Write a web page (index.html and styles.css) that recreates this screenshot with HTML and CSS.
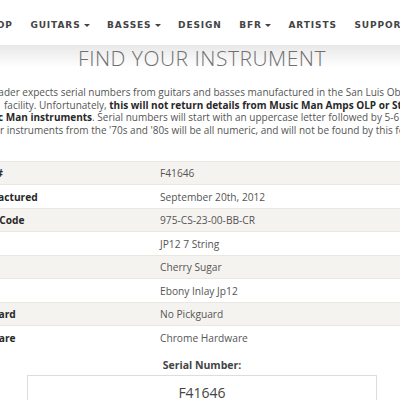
FILE: index.html
```html
<!doctype html>
<html>
	<head>
		<title>Serial Number Reader</title>
		<link rel="stylesheet" href="styles.css">
	</head>
	<body>
		<div class="page">
			<header class="topbar">
				<nav class="menu">
					<a href="#">SHOP</a>
					<a href="#">GUITARS <span class="caret"></span></a>
					<a href="#">BASSES <span class="caret"></span></a>
					<a href="#">DESIGN</a>
					<a href="#">BFR <span class="caret"></span></a>
					<a href="#">ARTISTS</a>
					<a href="#">SUPPORT</a>
				</nav>
			</header>

			<div class="banner">
				<h1>FIND YOUR INSTRUMENT</h1>
			</div>

			<p class="intro">
				<span class="line l1">The Serial Number Reader expects serial numbers from guitars and basses manufactured in the San Luis Obispo</span>
				<span class="line l2">facility. Unfortunately, <strong>this will not return details from Music Man Amps OLP or Sterling by</strong></span>
				<span class="line l3"><strong>Music Man instruments</strong>. Serial numbers will start with an uppercase letter followed by 5-6 numbers.</span>
				<span class="line l4">Older instruments from the '70s and '80s will be all numeric, and will not be found by this form.</span>
			</p>

			<table class="specs">
				<tr><th>Serial #</th><td>F41646</td></tr>
				<tr><th>Manufactured</th><td>September 20th, 2012</td></tr>
				<tr><th>Model Code</th><td>975-CS-23-00-BB-CR</td></tr>
				<tr><th>Model</th><td>JP12 7 String</td></tr>
				<tr><th>Color</th><td>Cherry Sugar</td></tr>
				<tr><th>Neck</th><td>Ebony Inlay Jp12</td></tr>
				<tr><th>Pickguard</th><td>No Pickguard</td></tr>
				<tr><th>Hardware</th><td>Chrome Hardware</td></tr>
			</table>

			<form class="lookup">
				<label for="serial">Serial Number:</label>
				<input id="serial" type="text" value="F41646">
			</form>
		</div>
	</body>
</html>
```

FILE: styles.css
```css
body {
	margin: 0;
	overflow: hidden;
	color: rgb(68,68,68);
	font-family: "Open Sans", "DejaVu Sans", sans-serif;
	background: rgb(255,255,255);
}

	.page {
		width: 640px;
		margin-left: -118px;
	}

	.topbar {
		height: 45px;
		background: rgb(255,255,255);
	}

	.menu {
		display: flex;
		gap: 17.5px;
		padding: 20px 0 0 99px;
	}

	.menu a {
		color: rgb(68,68,68);
		font-family: "DejaVu Sans", sans-serif;
		font-size: 9px;
		font-weight: 600;
		letter-spacing: 0.9px;
		text-decoration: none;
		white-space: nowrap;
	}

	.caret {
		display: inline-block;
		width: 0;
		height: 0;
		margin-left: -1px;
		vertical-align: middle;
		border-top: 3px solid rgb(68,68,68);
		border-left: 3px solid transparent;
		border-right: 3px solid transparent;
	}

	.banner {
		height: 25px;
		background: linear-gradient(rgb(232,232,232), rgb(255,255,255) 90%);
	}

	h1 {
		margin: 0;
		padding-top: 1px;
		text-align: center;
		color: rgb(112,112,112);
		font-size: 21px;
		font-weight: 300;
		letter-spacing: 0.5px;
		line-height: 24px;
	}

	.intro {
		margin: 16px 0 0;
		font-size: 10px;
		line-height: 12.7px;
		color: rgb(85,85,85);
		white-space: nowrap;
	}

	.intro .line {
		display: block;
	}

	.intro strong {
		color: rgb(40,40,40);
	}

	.l1 { margin-left: 15px; }
	.l2 { margin-left: 122px; }
	.l3 { margin-left: 92px; }
	.l4 { margin-left: 96px; }

	.specs {
		width: 100%;
		margin-top: 24px;
		border-collapse: collapse;
		font-size: 10.2px;
	}

	.specs tr {
		height: 23.5px;
		border-top: 1px solid rgb(234,230,224);
	}

	.specs tr:nth-child(odd) {
		background: rgb(245,243,239);
	}

	.specs th {
		width: 185px;
		padding: 0 0 0 83px;
		text-align: left;
		color: rgb(40,40,40);
		font-weight: 700;
	}

	.specs td {
		padding: 0 0 0 10px;
		color: rgb(85,85,85);
	}

	.lookup {
		display: flex;
		flex-direction: column;
		align-items: center;
		margin-top: 9px;
	}

	.lookup label {
		color: rgb(68,68,68);
		font-size: 10.5px;
		font-weight: 700;
		margin-bottom: 3px;
	}

	.lookup input {
		box-sizing: border-box;
		width: 350px;
		height: 34px;
		border: 1px solid rgb(221,221,221);
		text-align: center;
		color: rgb(68,68,68);
		font-family: "Open Sans", sans-serif;
		font-size: 14px;
	}
```
